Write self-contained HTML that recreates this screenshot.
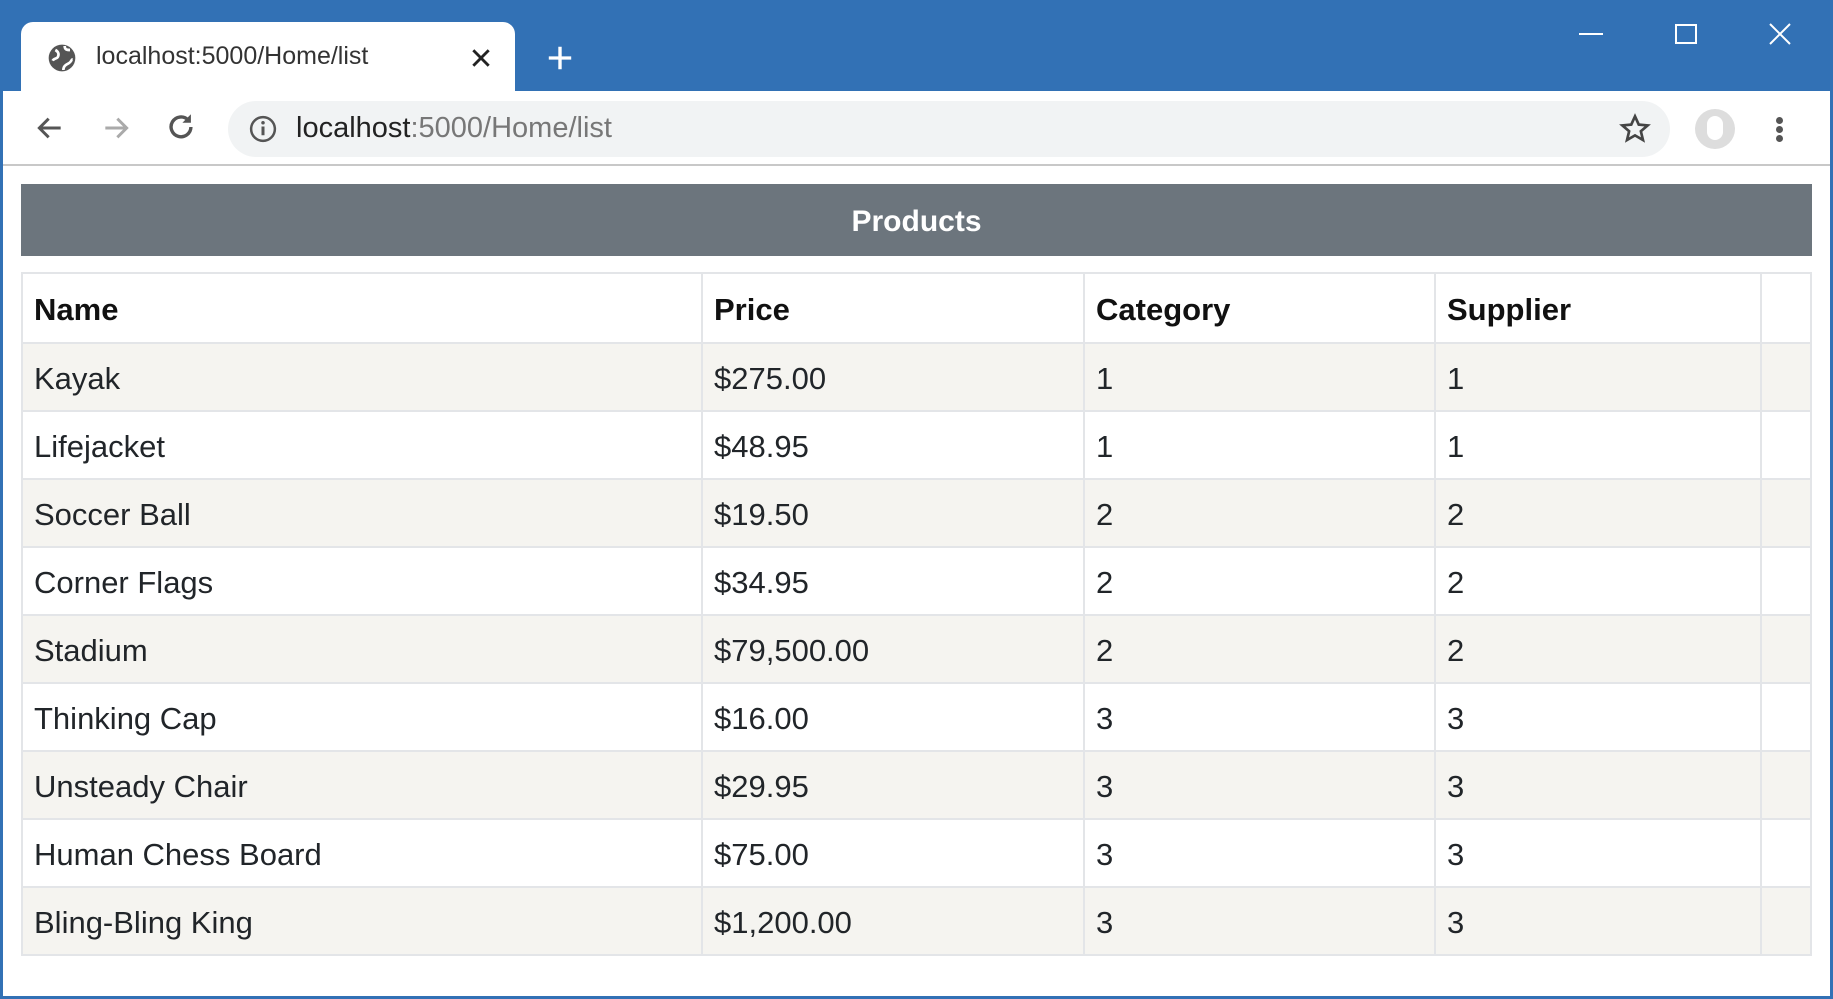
<!DOCTYPE html>
<html><head><meta charset="utf-8"><style>
*{margin:0;padding:0;box-sizing:border-box}
body{width:1833px;height:999px;background:#fff;font-family:"Liberation Sans",sans-serif;position:relative;overflow:hidden}
.abs{position:absolute}
table{position:absolute;left:21px;top:272px;width:1791px;border-collapse:collapse;font-size:31px;color:#212529}
td,th{border:2px solid #e3e5e8;padding:3px 11px 0;text-align:left;height:68px}
th{font-weight:bold;height:70px;color:#111}
tr.s td{background:#f5f4f0}
</style></head><body>
<div class="abs" style="left:0;top:0;width:1833px;height:91px;background:#3271b5"></div>
<div class="abs" style="left:0;top:0;width:3px;height:999px;background:#3271b5"></div>
<div class="abs" style="right:0;top:0;width:3px;height:999px;background:#3271b5"></div>
<div class="abs" style="left:0;bottom:0;width:1833px;height:3px;background:#3271b5"></div>
<div class="abs" style="left:21px;top:22px;width:494px;height:72px;background:#fff;border-radius:12px 12px 0 0"></div>
<svg class="abs" style="left:46px;top:42px" width="32" height="32" viewBox="0 0 24 24"><circle cx="12" cy="12" r="10" fill="#555"/><path d="M7 6c2 1 3 3 2 5s-3 1-4 3M14 3c0 3 2 3 4 3M13 21c0-3 2-4 4-5s2-3 3-3" stroke="#fff" stroke-width="2" fill="none"/></svg>
<div class="abs" style="left:96px;top:42px;font-size:25px;color:#333">localhost:5000/Home/list</div>
<svg class="abs" style="left:470px;top:47px" width="22" height="22" viewBox="0 0 20 20"><path d="M3 3L17 17M17 3L3 17" stroke="#222" stroke-width="2.6"/></svg>
<svg class="abs" style="left:546px;top:44px" width="28" height="28" viewBox="0 0 20 20"><path d="M10 2V18M2 10H18" stroke="#fff" stroke-width="2.4"/></svg>
<svg class="abs" style="left:1578px;top:24px" width="26" height="20"><path d="M1 10H25" stroke="#fff" stroke-width="2"/></svg>
<svg class="abs" style="left:1674px;top:23px" width="24" height="22"><rect x="2" y="2" width="20" height="18" fill="none" stroke="#fff" stroke-width="2"/></svg>
<svg class="abs" style="left:1767px;top:21px" width="26" height="26"><path d="M3 3L23 23M23 3L3 23" stroke="#fff" stroke-width="2"/></svg>
<div class="abs" style="left:3px;top:164px;width:1827px;height:2px;background:#c8c8c8"></div>
<svg class="abs" style="left:32px;top:112px" width="36" height="32" viewBox="0 0 24 24"><path d="M20 12H5M11 5L4 12L11 19" stroke="#555" stroke-width="2.2" fill="none"/></svg>
<svg class="abs" style="left:98px;top:112px" width="36" height="32" viewBox="0 0 24 24"><path d="M4 12H19M13 5L20 12L13 19" stroke="#aaa" stroke-width="2.2" fill="none"/></svg>
<svg class="abs" style="left:164px;top:110px" width="34" height="34" viewBox="0 0 24 24"><path d="M19 12a7 7 0 1 1-2-5" stroke="#555" stroke-width="2.4" fill="none"/><path d="M19 3V9H13Z" fill="#555"/></svg>
<div class="abs" style="left:228px;top:101px;width:1442px;height:56px;background:#f1f3f4;border-radius:28px"></div>
<svg class="abs" style="left:248px;top:114px" width="30" height="30" viewBox="0 0 24 24"><circle cx="12" cy="12" r="9.5" stroke="#555" stroke-width="2" fill="none"/><path d="M12 10V17" stroke="#555" stroke-width="2.4"/><circle cx="12" cy="7" r="1.4" fill="#555"/></svg>
<div class="abs" style="left:296px;top:112px;font-size:29px;color:#222">localhost<span style="color:#777">:5000/Home/list</span></div>
<svg class="abs" style="left:1618px;top:113px" width="34" height="32" viewBox="0 0 24 24"><path d="M12 2.5l2.8 6.2 6.7.6-5.1 4.4 1.6 6.6L12 16.8l-6 3.5 1.6-6.6-5.1-4.4 6.7-.6z" fill="none" stroke="#444" stroke-width="2"/></svg>
<div class="abs" style="left:1695px;top:109px;width:40px;height:40px;border-radius:50%;background:#ddd"></div>
<div class="abs" style="left:1707px;top:116px;width:16px;height:24px;border-radius:8px;background:#fff"></div>
<div class="abs" style="left:1776px;top:117px;width:7px;height:7px;border-radius:50%;background:#555"></div>
<div class="abs" style="left:1776px;top:126px;width:7px;height:7px;border-radius:50%;background:#555"></div>
<div class="abs" style="left:1776px;top:135px;width:7px;height:7px;border-radius:50%;background:#555"></div>
<div class="abs" style="left:21px;top:184px;width:1791px;height:72px;background:#6c757d;color:#fff;font-weight:bold;font-size:30px;text-align:center;line-height:76px">Products</div>
<table>
<colgroup><col style="width:680px"><col style="width:382px"><col style="width:351px"><col style="width:326px"><col></colgroup>
<tr><th>Name</th><th>Price</th><th>Category</th><th>Supplier</th><th></th></tr>
<tr class="s"><td>Kayak</td><td>$275.00</td><td>1</td><td>1</td><td></td></tr>
<tr><td>Lifejacket</td><td>$48.95</td><td>1</td><td>1</td><td></td></tr>
<tr class="s"><td>Soccer Ball</td><td>$19.50</td><td>2</td><td>2</td><td></td></tr>
<tr><td>Corner Flags</td><td>$34.95</td><td>2</td><td>2</td><td></td></tr>
<tr class="s"><td>Stadium</td><td>$79,500.00</td><td>2</td><td>2</td><td></td></tr>
<tr><td>Thinking Cap</td><td>$16.00</td><td>3</td><td>3</td><td></td></tr>
<tr class="s"><td>Unsteady Chair</td><td>$29.95</td><td>3</td><td>3</td><td></td></tr>
<tr><td>Human Chess Board</td><td>$75.00</td><td>3</td><td>3</td><td></td></tr>
<tr class="s"><td>Bling-Bling King</td><td>$1,200.00</td><td>3</td><td>3</td><td></td></tr>
</table>
</body></html>
